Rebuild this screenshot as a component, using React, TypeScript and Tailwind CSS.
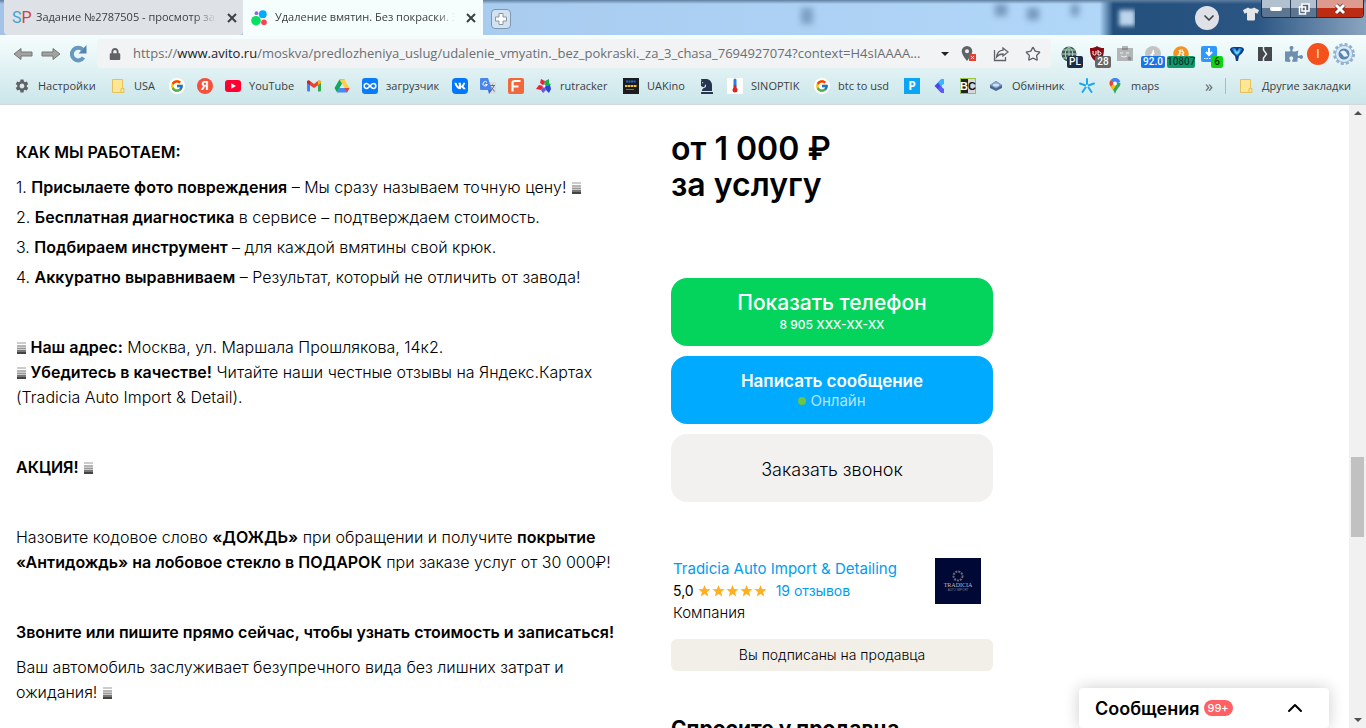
import React from "react";
import { FcGoogle } from "react-icons/fc";
import { FaChessKnight, FaLock, FaPuzzlePiece, FaTshirt, FaVk, FaBitcoin } from "react-icons/fa";
import { MdSettings } from "react-icons/md";
import { ChevronDown, ChevronUp, Star } from "lucide-react";

type Bookmark = {
  icon: React.ReactNode;
  title: string;
  label?: string;
  width?: string;
};

function Folder() {
  return (
    <svg viewBox="0 0 16 16" className="size-4">
      <path d="M2.500 1.500h10v9h1.500v4H2.500z" fill="#ffe694" stroke="#e3c15c" />
      <path d="M11 14.500v-4h1.500" fill="none" stroke="#e3c15c" />
    </svg>
  );
}

function GoogleMark() {
  return (
    <span className="flex size-4 items-center justify-center rounded-full bg-white">
      <FcGoogle className="size-3.5" />
    </span>
  );
}

const bookmarks: Bookmark[] = [
  {
    title: "Настройки",
    label: "Настройки",
    width: "w-[60px]",
    icon: <MdSettings className="size-4 text-[#5f6368]" />,
  },
  { title: "USA", label: "USA", width: "w-[23px]", icon: <Folder /> },
  { title: "Google", icon: <GoogleMark /> },
  {
    title: "Яндекс",
    icon: (
      <span className="flex size-4 items-center justify-center rounded-full bg-[#f5503c] text-xs font-bold text-white">
        Я
      </span>
    ),
  },
  {
    title: "YouTube",
    label: "YouTube",
    width: "w-[45px]",
    icon: (
      <svg viewBox="0 0 16 16" className="size-4">
        <rect y="2" width="16" height="12" rx="3" fill="#f03" />
        <path d="M6.300 5.300 11 8l-4.700 2.700z" fill="#fff" />
      </svg>
    ),
  },
  {
    title: "Gmail",
    icon: (
      <svg viewBox="0 0 16 16" className="size-4">
        <path d="M1 4v8.500a1 1 0 0 0 1 1h2V6z" fill="#4285f4" />
        <path d="M15 4v8.500a1 1 0 0 1-1 1h-2V6z" fill="#34a853" />
        <path d="M1 4.200C1 2.300 3 2 4.200 3L8 6l3.800-3C13 2 15 2.300 15 4.200l-3 3L8 10 4 7.200z" fill="#ea4335" />
        <path d="M12 3v4.200l3-2.400v-.6C15 2.300 13.200 2 12 3z" fill="#fbbc04" />
        <path d="M1 4.200v.6l3 2.400V3C2.800 2 1 2.300 1 4.200z" fill="#c5221f" />
      </svg>
    ),
  },
  {
    title: "Google Drive",
    icon: (
      <svg viewBox="0 0 16 16" className="size-4">
        <path d="M5.500 1.500h5L8 6 3 14.500.5 10z" fill="#11a861" />
        <path d="M5.500 1.500h5l5 8.500h-5z" fill="#ffcf48" />
        <path d="M5.500 10h10L13 14.500H3z" fill="#4688f4" />
        <path d="M10.500 10h5L13 14.500z" fill="#ea4335" />
        <path d="M8 6l2.400 4H5.600z" fill="#d9eef2" />
      </svg>
    ),
  },
  {
    title: "загрузчик",
    label: "загрузчик",
    width: "w-[54px]",
    icon: (
      <svg viewBox="0 0 16 16" className="size-4">
        <rect width="16" height="16" rx="3" fill="#087cfa" />
        <path
          d="M8 8C6.500 6.200 5.700 5.600 4.600 5.600a2.400 2.400 0 0 0 0 4.800C5.700 10.400 6.500 9.800 8 8s2.300-2.400 3.400-2.400a2.400 2.400 0 0 1 0 4.800C10.300 10.400 9.500 9.800 8 8z"
          fill="none"
          stroke="#fff"
          strokeWidth="1.500"
        />
      </svg>
    ),
  },
  {
    title: "VK",
    icon: (
      <span className="flex size-4 items-center justify-center rounded bg-[#07f]">
        <FaVk className="size-3 text-white" />
      </span>
    ),
  },
  {
    title: "Переводчик",
    icon: (
      <svg viewBox="0 0 16 16" className="size-4">
        <path d="M6 4h9a1 1 0 0 1 1 1v10a1 1 0 0 1-1 1H9z" fill="#dadce0" />
        <path d="M1 0h7l4 12H1a1 1 0 0 1-1-1V1a1 1 0 0 1 1-1z" fill="#4a86ea" />
        <path d="M7 4.500A2.200 2.200 0 1 0 7.300 6.500H5.200" fill="none" stroke="#fff" />
        <path d="M10 7.500h5M12.500 6.500v1M14 7.500c-.5 2-1.700 3.500-3 4.500M11.500 9.500l3 4" fill="none" stroke="#5f6f86" />
        <path d="M9 16l3-4H8z" fill="#3367d6" />
      </svg>
    ),
  },
  {
    title: "F",
    icon: (
      <svg viewBox="0 0 16 16" className="size-4">
        <rect width="16" height="16" rx="2" fill="#f1693a" />
        <path d="M4.500 13.500V5q0-2 2-2h6M4.500 8.500h6" fill="none" stroke="#fff" strokeWidth="2.200" />
      </svg>
    ),
  },
  {
    title: "rutracker",
    label: "rutracker",
    width: "w-[51px]",
    icon: (
      <svg viewBox="0 0 16 16" className="size-4">
        <path d="M8 8 4 5l1-4 4 2z" fill="#e62440" />
        <path d="M8 8 9 3l4-2 0 4 2 2z" fill="#18b04b" />
        <path d="M8 8l6-1 1 4-2 4-3-3z" fill="#2a45d8" />
        <path d="M8 8l2 4-3 3-2-3z" fill="#6c55dc" />
        <path d="M8 8l-3 4-5-1 3-4z" fill="#e62440" />
        <circle cx="8" cy="8" r="1.500" fill="#fff" />
      </svg>
    ),
  },
  {
    title: "UAKino",
    label: "UAKino",
    width: "w-[40px]",
    icon: (
      <svg viewBox="0 0 16 16" className="size-4">
        <rect width="16" height="16" fill="#1c1c1e" />
        <path d="M3 3.500h10" stroke="#1e6bd6" strokeWidth="2" strokeDasharray="2 .5" />
        <path d="M2 8h12" stroke="#f3c41c" strokeWidth="2" strokeDasharray="2.500 .5" />
        <path d="M3 11.500h8" stroke="#8a6a54" />
      </svg>
    ),
  },
  { title: "Шахматы", icon: <FaChessKnight className="size-4 text-[#27344f]" /> },
  {
    title: "SINOPTIK",
    label: "SINOPTIK",
    width: "w-[51px]",
    icon: (
      <svg viewBox="0 0 16 16" className="size-4">
        <rect width="16" height="16" rx="1" fill="#fff" />
        <path d="M8 2v8" stroke="#2b7fe0" strokeWidth="3" strokeLinecap="round" />
        <path d="M8 7v4" stroke="#e0261c" strokeWidth="2.500" />
        <circle cx="8" cy="12" r="2.500" fill="#e0261c" />
      </svg>
    ),
  },
  { title: "btc to usd", label: "btc to usd", width: "w-[54px]", icon: <GoogleMark /> },
  {
    title: "P",
    icon: (
      <span className="flex size-4 items-center justify-center bg-[#0aa5f5] text-xs font-bold text-white">
        P
      </span>
    ),
  },
  {
    title: "Стрелка",
    icon: (
      <svg viewBox="0 0 16 16" className="size-4">
        <path d="M2.500 8l7-7v14z" fill="#4b45f0" />
        <path d="M6 4.500 9.500 1H12v5L8.500 8z" fill="#39b5ff" />
        <path d="M8.500 8l3.500 3v4H9.500L6 11.500z" fill="#5a5cf5" />
      </svg>
    ),
  },
  {
    title: "BC",
    icon: (
      <svg viewBox="0 0 16 16" className="size-4">
        <rect x=".5" y=".5" width="15" height="15" fill="#d7d7d7" stroke="#9bc23c" />
        <rect x="1" y="1" width="7" height="14" fill="#222" />
        <text x="0" y="12" fontSize="11" fontWeight="700" fill="#fff" fontFamily="Liberation Sans">B</text>
        <text x="8" y="12" fontSize="11" fontWeight="700" fill="#111" fontFamily="Liberation Sans">C</text>
      </svg>
    ),
  },
  {
    title: "Обмінник",
    label: "Обмінник",
    width: "w-[55px]",
    icon: (
      <svg viewBox="0 0 16 16" className="size-4">
        <path d="M2 7l6-4 6 4v3l-6 3-6-3z" fill="#4a668f" />
        <path d="M2 7l6-4 6 4-6 3.500z" fill="#84a3cf" />
        <ellipse cx="8" cy="7" rx="3" ry="1.500" fill="#d3e2f5" />
      </svg>
    ),
  },
  {
    title: "Київстар",
    icon: (
      <svg viewBox="0 0 16 16" className="size-4">
        <path
          d="M8 1v5M1 5.500l5 1.800M15 5.500l-5 1.800M6.500 9.500 3.500 14M9.500 9.500l3 4.500"
          fill="none"
          stroke="#19a8f4"
          strokeWidth="2"
          strokeLinecap="round"
        />
      </svg>
    ),
  },
  {
    title: "maps",
    label: "maps",
    width: "w-[30px]",
    icon: (
      <svg viewBox="0 0 16 16" className="size-4">
        <path d="M3.800 9C6 11.500 7 13 8 16c1-3 2-4.500 4-7 1-1.200 1.500-2.200 1.500-3.800L9 4z" fill="#34a853" />
        <path d="M3.800 9 9 3 5 1.500C3 3 2 5.500 3.800 9z" fill="#fbbc04" />
        <path d="M3.700 2 8 6 3.600 8.500C2 6 2.300 3.500 3.700 2z" fill="#ea4335" />
        <path d="M3.700 2a5.500 5.500 0 0 1 9.600 2L8 6z" fill="#4285f4" />
        <path d="M3.800 9 7 5l2.500 1.800L6 12z" fill="#fbbc04" />
        <circle cx="8" cy="5.500" r="1.900" fill="#fff" />
      </svg>
    ),
  },
];

type Extension = { title: string; icon: React.ReactNode; badge?: string; badgeStyle?: string };

const extensions: Extension[] = [
  {
    title: "VPN",
    badge: "PL",
    badgeStyle: "-right-1.5 w-4 bg-[#1b2b48] text-white",
    icon: (
      <svg viewBox="0 0 16 16" className="size-4">
        <circle cx="8" cy="8" r="7.500" fill="#3b5b4c" />
        <path d="M8 0v16M.5 8h15M2 4h12M2 12h12M8 .5c-5 4-5 11 0 15M8 .5c5 4 5 11 0 15" fill="none" stroke="#b6d4cd" />
      </svg>
    ),
  },
  {
    title: "uBlock",
    badge: "28",
    badgeStyle: "-right-1.5 w-4 bg-[#666] text-white",
    icon: (
      <svg viewBox="0 0 16 16" className="size-4">
        <path d="M8 0c2 1.500 4 2 7 2 0 7-1 11-7 14C2 13 1 9 1 2c3 0 5-.5 7-2z" fill="#8a0a12" />
        <path d="M4 5v3q0 1 1.500 1T7 8V5M9 4v5h1.500q1.500 0 1.500-1.500T10.500 6H9" fill="none" stroke="#fff" />
      </svg>
    ),
  },
  {
    title: "Буфер обмена",
    icon: (
      <svg viewBox="0 0 16 16" className="size-4">
        <path d="M0 2h5V0h6v2h5v13H0z" fill="#b3b6b8" />
        <path d="M5 2h6v2H5z" fill="#8c8f91" />
        <path d="M3 7h3M9 7h3M4 10q3 2 6 0" fill="none" stroke="#eee" />
        <circle cx="12.500" cy="12.500" r="2" fill="#8c8f91" />
      </svg>
    ),
  },
  {
    title: "Litecoin",
    badge: "92.0",
    badgeStyle: "-right-1 w-6 bg-[#1a73e8] text-white",
    icon: (
      <svg viewBox="0 0 16 16" className="size-4">
        <circle cx="8" cy="8" r="8" fill="#c3c3c3" />
        <path d="M8.500 4 7 11M5.500 9l4-2" fill="none" stroke="#fff" strokeWidth="1.500" />
      </svg>
    ),
  },
  {
    title: "Bitcoin",
    badge: "10807",
    badgeStyle: "-right-1.5 w-7 bg-[#0d9b6c] text-[#12362b]",
    icon: <FaBitcoin className="size-4 text-[#f7931a]" />,
  },
  {
    title: "Загрузки",
    badge: "6",
    badgeStyle: "-right-1.5 w-3 bg-[#0fd30f] text-[#0b2b0b]",
    icon: (
      <svg viewBox="0 0 16 16" className="size-4">
        <rect width="16" height="16" rx="2" fill="#2e98ff" />
        <path d="M8 2v6M5 6l3 3 3-3" fill="none" stroke="#fff" strokeWidth="2" />
        <path d="M3 12.500h10" stroke="#fff" strokeDasharray="1.500 1" />
      </svg>
    ),
  },
  {
    title: "Фильтр",
    icon: (
      <svg viewBox="0 0 16 16" className="size-4">
        <path d="M1 4q0-3 4-3h6q4 0 4 3-1 3-5 6l-1 5H7l-1-5Q2 7 1 4z" fill="#123c80" />
        <path d="M3 3q2 5 5 7 3-2 5-7-2-1-3-1L8 5 6 2Q4 2 3 3z" fill="#1f8fe0" />
        <path d="M5 3l3 3 3-3-1 4-2 1.500L6 7z" fill="#6fd2ff" />
      </svg>
    ),
  },
  {
    title: "Панель",
    icon: (
      <svg viewBox="0 0 16 16" className="size-4">
        <path d="M1 1h14v14H1z" fill="#45484c" />
        <path d="M6.500 0v4l3 4-3 4v4" fill="none" stroke="#e4f2f4" strokeWidth="1.500" />
      </svg>
    ),
  },
];

function Close({ label }: { label: string }) {
  return (
    <button aria-label={label} className="flex size-4 shrink-0 items-center justify-center">
      <svg viewBox="0 0 10 10" className="size-2.5">
        <path d="M1 1l8 8M9 1 1 9" stroke="#3c4043" strokeWidth="2" />
      </svg>
    </button>
  );
}

// what shows through the glass title bar
function Glass() {
  return (
    <div className="relative flex-1 overflow-hidden">
      <span className="absolute top-2 right-[322px] h-4 w-3 bg-[#5b7fa5] opacity-60 blur-[3px]" />
      <span className="absolute top-1 right-32 h-3 w-3 bg-[#4f6f94] opacity-60 blur-[3px]" />
      <span className="absolute top-2 right-24 h-3 w-3 bg-[#4f6f94] opacity-60 blur-[3px]" />
      <span className="absolute top-1 right-14 h-3 w-2 bg-[#4f6f94] opacity-60 blur-[3px]" />
      <span className="absolute top-2.5 right-0 size-4 bg-[#bcd5ec] blur-[2px]" />
    </div>
  );
}

function TabStrip() {
  return (
    <div className="flex h-[35px] shrink-0 bg-linear-to-r from-[#a3cbf0] via-[#b4d8f8] via-[80.5%] to-[#7e9ab8] pl-1 text-[11px] text-[#3c4043] [background-image:linear-gradient(to_bottom,#5f7f9f,transparent_4px),linear-gradient(to_right,#a3c4e8,#b0d6f8_80.5%,#234f7c_81.5%,#2b5683_92%,#8ba5c0)]">
      <div className="flex w-[239px] items-center gap-2 rounded-b bg-[#dee1e6] pr-[3px] pl-2">
        <span className="w-4 text-center font-['Roboto'] text-base text-[#3fa0dc]">
          S<span className="text-[#d2403f]">P</span>
        </span>
        <span className="w-0 flex-1 overflow-hidden [mask-image:linear-gradient(to_right,black_88%,transparent)] whitespace-nowrap">
          Задание №2787505 - просмотр за
        </span>
        <Close label="Закрыть вкладку" />
      </div>
      <div className="flex w-[240px] items-center gap-2 bg-[#f6fdfd] pr-1 pl-2">
        <svg viewBox="0 0 16 16" className="size-4 shrink-0">
          <circle cx="11.800" cy="4.200" r="3.900" fill="#0af" />
          <circle cx="5" cy="10.700" r="4.800" fill="#04e061" />
          <circle cx="13" cy="12.300" r="2.800" fill="#ff4053" />
          <circle cx="5.500" cy="3.200" r="1.900" fill="#965eeb" />
        </svg>
        <span className="w-0 flex-1 overflow-hidden [mask-image:linear-gradient(to_right,black_90%,transparent)] whitespace-nowrap">
          Удаление вмятин. Без покраски. З
        </span>
        <Close label="Закрыть вкладку" />
      </div>
      <button
        aria-label="Новая вкладка"
        className="mt-[9px] ml-2 flex h-5 w-5 items-center justify-center rounded-sm border border-[#7e97b1] bg-[#d3e2f1]"
      >
        <svg viewBox="0 0 12 12" className="size-3">
          <path d="M4 .5h4V4h3.500v4H8v3.500H4V8H.5V4H4z" fill="#fff" stroke="#8b97a3" />
        </svg>
      </button>
      <Glass />
      <div className="ml-[60px] flex items-start pr-0.5">
        <button
          aria-label="Поиск вкладок"
          className="mt-1.5 mr-6 flex size-6 items-center justify-center rounded-full bg-[#dee1e6] pl-1"
        >
          <ChevronDown className="size-4 text-[#3c4043]" strokeWidth={2.5} />
        </button>
        <FaTshirt className="mt-1.5 mr-0.5 size-4 text-[#e6e6e6]" />
        <div className="flex h-[18px] overflow-hidden rounded-b border border-t-0 border-[#1f2f45] text-white">
          <button
            aria-label="Свернуть"
            className="flex w-7 items-center justify-center bg-linear-to-b from-[#b3c0cf] from-50% to-[#5c7590] to-50%"
          >
            <span className="h-1 w-3 rounded-xs border-[#3c4c60] bg-white" />
          </button>
          <button
            aria-label="Развернуть"
            className="flex w-[27px] items-center justify-center border-x border-[#2b3e58] bg-linear-to-b from-[#b3c0cf] from-50% to-[#5c7590] to-50%"
          >
            <svg viewBox="0 0 12 12" className="size-3">
              <path d="M4 1h7v7H4zM1.500 4h6v7h-6z" fill="#54657a" stroke="#fff" strokeWidth="1.500" />
            </svg>
          </button>
          <button
            aria-label="Закрыть"
            className="flex w-[46px] items-center justify-center bg-linear-to-b from-[#dd9a8f] from-50% to-[#bc2c12] to-50%"
          >
            <svg viewBox="0 0 12 12" className="size-3">
              <path d="M2 2l8 8M10 2l-8 8" stroke="#5a2a28" strokeWidth="4.500" />
              <path d="M2 2l8 8M10 2l-8 8" stroke="#fff" strokeWidth="3" />
            </svg>
          </button>
        </div>
      </div>
    </div>
  );
}

function NavArrow({ back }: { back?: boolean }) {
  return (
    <svg viewBox="0 0 20 12" className="h-3 w-5">
      <path
        d={back ? "M1 6l7-5.500v3.500h11v4H8v3.500z" : "M19 6l-7-5.500v3.500H1v4h11v3.500z"}
        fill="#a2a2a2"
        stroke="#777"
      />
    </svg>
  );
}

function Toolbar() {
  return (
    <div className="flex h-[33px] shrink-0 items-end">
      <div className="flex h-[29px] items-center gap-2 pr-2.5 pl-[13px]">
        <button aria-label="Назад"><NavArrow back /></button>
        <button aria-label="Вперёд"><NavArrow /></button>
        <button aria-label="Обновить">
          <svg viewBox="0 0 18 18" className="size-[18px]">
            <path d="M14.500 12.500A6.300 6.300 0 1 1 13.500 4.500" fill="none" stroke="#6798c0" strokeWidth="4" />
            <path d="M17.500 0v8.500h-8z" fill="#5585ae" />
          </svg>
        </button>
      </div>
      <div className="flex h-[29px] min-w-0 flex-1 items-center rounded bg-[#f1f3f4] pl-3">
        <FaLock className="mr-3 size-3 shrink-0 text-[#5f6368]" />
        <div className="w-0 flex-1 overflow-hidden text-[13px] whitespace-nowrap text-[#6b6f73]">
          https://<span className="text-[#202124]">www.avito.ru</span>
          /moskva/predlozheniya_uslug/udalenie_vmyatin._bez_pokraski._za_3_chasa_7694927074?context=H4sIAAAA...
        </div>
        <svg viewBox="0 0 8 4" className="mr-3 ml-2 h-1 w-2 shrink-0"><path d="M0 0h8L4 4z" fill="#222" /></svg>
        <div className="flex shrink-0 items-center gap-4 pr-2.5">
          <svg viewBox="0 0 16 16" className="size-4">
            <path d="M6 0a5.300 5.300 0 0 0-5.300 5.300C.7 9 6 15 6 15s5.300-6 5.300-9.700A5.300 5.300 0 0 0 6 0zm0 3.200a2 2 0 1 1 0 4 2 2 0 0 1 0-4z" fill="#5f6368" />
            <path d="M8 8h7v7H8z" fill="#de4337" />
            <path d="M10 10l3 3M13 10l-3 3" stroke="#fff" />
          </svg>
          <svg viewBox="0 0 16 16" className="size-4" fill="none" stroke="#5f6368" strokeWidth="1.300">
            <path d="M1.500 4v10.500h11V11M10 2l5 4-5 4V8C7 8 5 9 3.500 11 4 7 6.500 4.500 10 4.200z" />
          </svg>
          <Star className="size-4 text-[#5f6368]" />
        </div>
      </div>
      <div className="flex h-[29px] items-center gap-3 pr-[11px] pl-2.5">
        {extensions.map((ext) => (
          <button key={ext.title} aria-label={ext.title} className="relative size-4">
            {ext.icon}
            {ext.badge && (
              <span
                className={
                  "absolute top-2.5 h-3 rounded-xs text-center font-['Roboto'] text-[10px] leading-3 font-medium " +
                  ext.badgeStyle
                }
              >
                {ext.badge}
              </span>
            )}
          </button>
        ))}
        <div className="flex items-center gap-1">
          <button aria-label="Расширения">
            <FaPuzzlePiece className="size-[18px] text-[#6f8fae]" />
          </button>
          <button aria-label="Профиль" className="size-[22px] rounded-full bg-[#f4511e] text-xs text-white">
            I
          </button>
          <button aria-label="Меню">
            <svg viewBox="0 0 22 22" className="size-[22px]">
              <circle cx="11" cy="11" r="9.500" fill="none" stroke="#8fb0cf" strokeWidth="3" strokeDasharray="3 2" />
              <circle cx="11" cy="11" r="8.500" fill="#dcebf8" stroke="#8fb0cf" />
              <circle cx="11" cy="11" r="5.500" fill="#5a85b0" />
              <path d="M7 9q4-3 6 0l2 4q-5 2-5-1z" fill="#e8f3fc" />
            </svg>
          </button>
        </div>
      </div>
    </div>
  );
}

function Bookmarks() {
  return (
    <nav className="flex h-9 shrink-0 items-center gap-3 pr-3 pl-3.5 text-[11px] text-[#3c4043]">
      {bookmarks.map((b) => (
        <a key={b.title} href="#" aria-label={b.title} className="flex shrink-0 items-center gap-2">
          {b.icon}
          {b.label && <span className={"whitespace-nowrap " + b.width}>{b.label}</span>}
        </a>
      ))}
      <span className="ml-auto text-base text-[#5f6368]">»</span>
      <span className="h-4 w-px bg-[#a9bcc0]" />
      <a href="#" className="flex shrink-0 items-center gap-2 whitespace-nowrap">
        <Folder />
        <span className="w-[92px]">Другие закладки</span>
      </a>
    </nav>
  );
}

// glyph that is missing from the page font
function Glyph() {
  return (
    <svg viewBox="0 0 10 12" className="inline-block h-3 w-2.5 align-[-1px]">
      <path d="M1 1h9" stroke="#ccc" strokeWidth="2" />
      <path d="M1 4h9" stroke="#b5b5b5" strokeWidth="2" />
      <path d="M1 6.500h9" stroke="#999" strokeWidth="2" />
      <path d="M1 9h9" stroke="#777" strokeWidth="2" />
      <path d="M1 11h9" stroke="#444" strokeWidth="2" />
    </svg>
  );
}

const steps = [
  ["Присылаете фото повреждения", " – Мы сразу называем точную цену! "],
  ["Бесплатная диагностика", " в сервисе – подтверждаем стоимость."],
  ["Подбираем инструмент", " – для каждой вмятины свой крюк."],
  ["Аккуратно выравниваем", " – Результат, который не отличить от завода!"],
];

function Description() {
  return (
    <article className="w-[654px] shrink-0 pt-[35px] pl-4 text-[16px] leading-[25px] font-light whitespace-nowrap [&_b]:font-semibold">
      <p><b>КАК МЫ РАБОТАЕМ:</b></p>
      <ol className="mt-2.5 flex flex-col gap-[5px]">
        {steps.map(([title, text], i) => (
          <li key={title}>
            {i + 1}. <b>{title}</b>
            {text}
            {i === 0 && <Glyph />}
          </li>
        ))}
      </ol>
      <p className="mt-[45px]">
        <Glyph /> <b>Наш адрес:</b> Москва, ул. Маршала Прошлякова, 14к2.
        <br />
        <Glyph /> <b>Убедитесь в качестве!</b> Читайте наши честные отзывы на Яндекс.Картах
        <br />
        (Tradicia Auto Import & Detail).
      </p>
      <p className="mt-[45px]">
        <b>АКЦИЯ!</b> <Glyph />
      </p>
      <p className="mt-[45px]">
        Назовите кодовое слово <b>«ДОЖДЬ»</b> при обращении и получите <b>покрытие</b>
        <br />
        <b>«Антидождь» на лобовое стекло в ПОДАРОК</b> при заказе услуг от 30 000₽!
      </p>
      <p className="mt-[45px]">
        <b>Звоните или пишите прямо сейчас, чтобы узнать стоимость и записаться!</b>
      </p>
      <p className="mt-2.5">
        Ваш автомобиль заслуживает безупречного вида без лишних затрат и
        <br />
        ожидания! <Glyph />
      </p>
    </article>
  );
}

function SellerPanel() {
  return (
    <aside className="w-[322px] shrink-0 pt-[26px]">
      <h1 className="text-[32px] leading-9 font-semibold">
        от 1 000 ₽
        <br />
        за услугу
      </h1>
      <div className="mt-[75px] flex flex-col gap-2.5">
        <button className="h-[68px] rounded-2xl bg-[#04d45c] pt-0.5 text-white">
          <span className="block text-[21px] leading-6 font-medium">Показать телефон</span>
          <span className="block text-xs leading-5 font-medium">8 905 XXX-XX-XX</span>
        </button>
        <button className="h-[68px] rounded-2xl bg-[#00aaff] pt-0.5 text-white">
          <span className="block text-[17px] leading-5 font-semibold">Написать сообщение</span>
          <span className="flex items-center justify-center gap-1 text-[15px] leading-5 text-[#b3e5ff]">
            <span className="size-2 rounded-full bg-[#6cc644]" />
            Онлайн
          </span>
        </button>
        <button className="h-[68px] rounded-2xl bg-[#f2f1f0] pt-0.5 text-[18px] font-light">
          Заказать звонок
        </button>
      </div>
      <div className="mt-14 flex justify-between pr-3 pl-0.5">
        <div className="text-[15px] leading-[22px]">
          <a href="#" className="text-[#009cf0]">Tradicia Auto Import & Detailing</a>
          <div className="flex items-center text-sm leading-[22px]">
            5,0
            <svg viewBox="0 0 70 14" className="mr-2 ml-1 h-3.5 w-[70px]" fill="#ffb021">
              {[0, 14, 28, 42, 56].map((x) => (
                <path
                  key={x}
                  transform={`translate(${x} 0)`}
                  d="M6.500 1l1.600 4 4.400.3-3.400 2.800 1.100 4.400-3.700-2.400-3.700 2.400 1.100-4.400L.5 5.300 4.900 5z"
                />
              ))}
            </svg>
            <a href="#" className="text-[#009cf0]">19 отзывов</a>
          </div>
          <p className="font-light">Компания</p>
        </div>
        <svg viewBox="0 0 46 46" className="size-[46px]">
          <rect width="46" height="46" fill="#000835" />
          <circle cx="23" cy="18" r="4.500" fill="none" stroke="#6b6872" strokeWidth="2" strokeDasharray="2 1" />
          <text x="23" y="29" textAnchor="middle" fontFamily="Liberation Serif" fontSize="6" fill="#b9bac6">
            TRADICIA
          </text>
          <text x="23" y="33" textAnchor="middle" fontFamily="Liberation Sans" fontSize="3" fill="#7d7f94">
            AUTO IMPORT
          </text>
        </svg>
      </div>
      <button className="mt-[15px] h-8 w-full rounded-md bg-[#f2efe9] text-sm font-light">
        Вы подписаны на продавца
      </button>
      <h2 className="mt-11 text-[21px] leading-7 font-bold">Спросите у продавца</h2>
    </aside>
  );
}

export default function App() {
  return (
    <div className="flex h-screen flex-col overflow-hidden bg-white font-['Open_Sans',sans-serif]">
      <TabStrip />
      <header className="shrink-0 border-b border-[#d5d8da] bg-gradient-to-b from-[#f6fdfd] to-[#cbe6ea]">
        <Toolbar />
        <Bookmarks />
      </header>
      <div className="relative flex min-h-0 flex-1">
        <main className="flex min-w-0 flex-1 gap-[17px] overflow-hidden font-['Inter',sans-serif] text-black">
          <Description />
          <SellerPanel />
        </main>
        <div className="flex w-[17px] flex-col items-center justify-between bg-[#f1f1f1] py-1.5">
          <svg viewBox="0 0 8 4" className="h-1 w-2"><path d="M0 4h8L4 0z" fill="#505050" /></svg>
          <div className="mt-40 h-20 w-[13px] bg-[#c1c1c1]" />
          <svg viewBox="0 0 8 4" className="h-1 w-2"><path d="M0 0h8L4 4z" fill="#505050" /></svg>
        </div>
        <button className="absolute right-[37px] bottom-0 flex h-10 w-[250px] items-center rounded bg-white pr-[22px] pl-4 font-['Inter',sans-serif] shadow-[0_0_16px_rgba(0,0,0,0.2)]">
          <span className="text-[18px] font-semibold">Сообщения</span>
          <span className="ml-1 rounded-full bg-[#ff6163] px-1 text-[11px] leading-4 font-medium text-white">99+</span>
          <ChevronUp className="ml-auto size-6" />
        </button>
      </div>
    </div>
  );
}
